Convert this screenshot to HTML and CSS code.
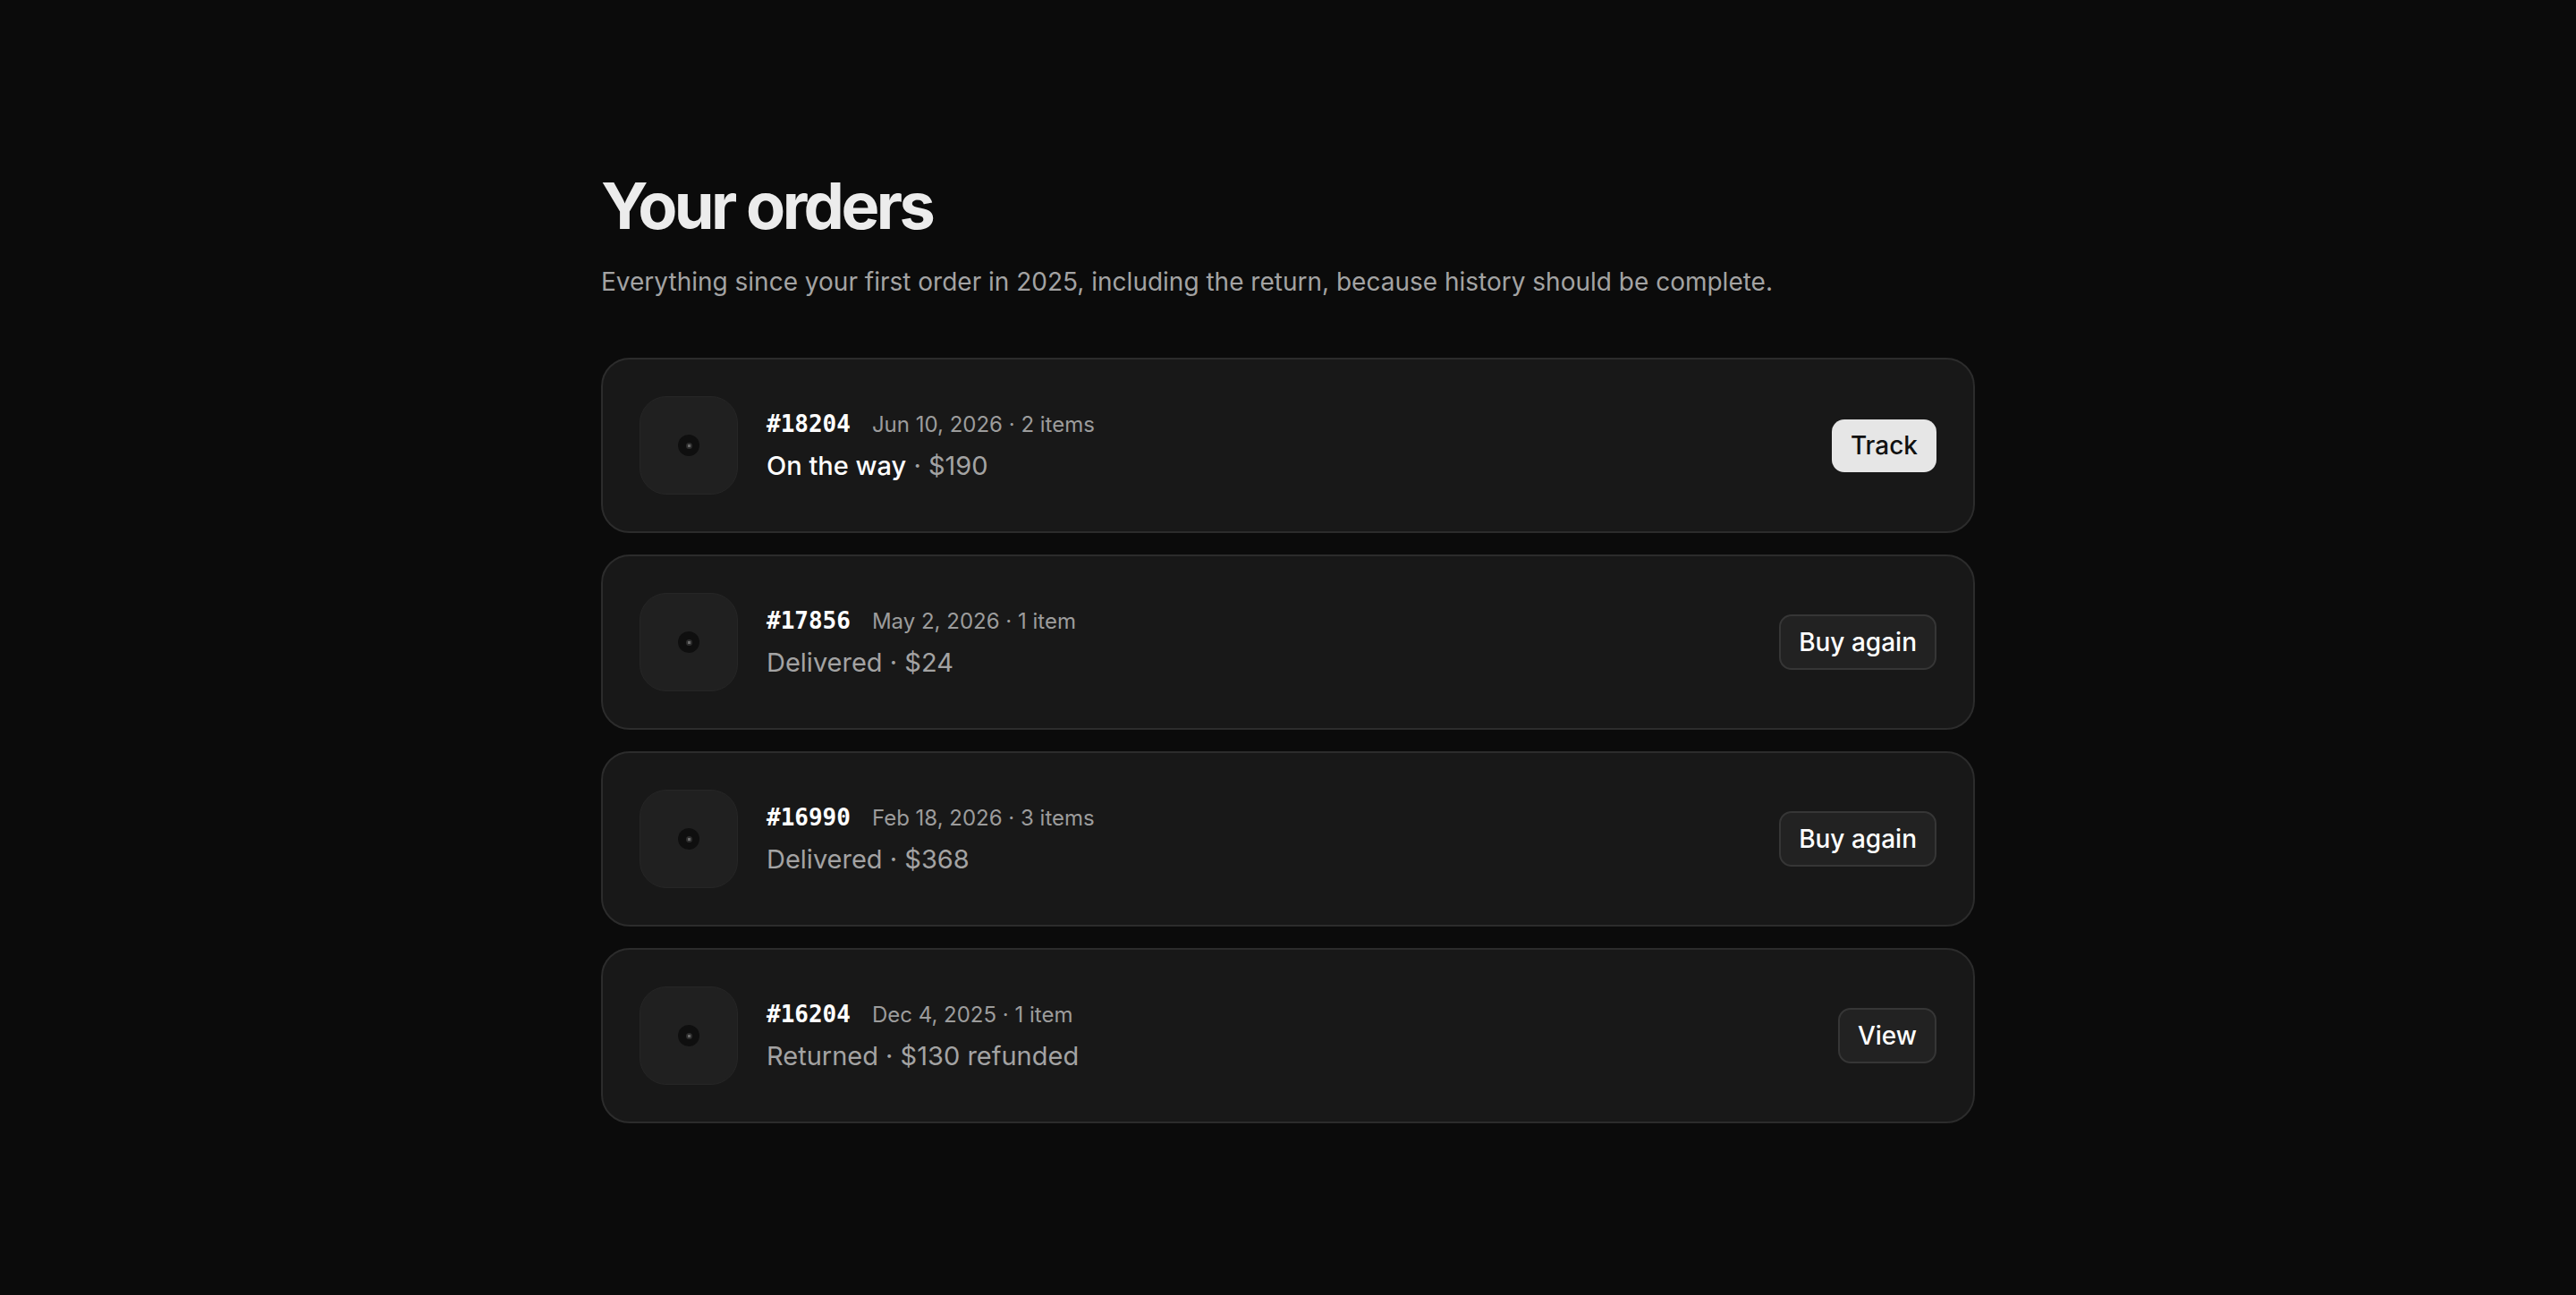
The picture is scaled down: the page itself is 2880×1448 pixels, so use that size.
FILE: index.html
```html
<!DOCTYPE html>
<html lang="en">
<head>
    <meta charset="UTF-8">
    <meta name="viewport" content="width=device-width, initial-scale=1.0">
    <title>Your orders</title>
    <link rel="stylesheet" href="styles.css">
</head>
<body>
    <main class="orders">
        <h1 class="orders-title">Your orders</h1>
        <p class="orders-lead">Everything since your first order in 2025, including the return, because history should be complete.</p>

        <ul class="order-list">
            <li class="order-card">
                <div class="order-thumb"><span class="thumb-dot"></span></div>
                <div class="order-info">
                    <div class="order-meta">
                        <span class="order-id">#18204</span>
                        <span class="order-date">Jun 10, 2026 · 2 items</span>
                    </div>
                    <div class="order-status"><strong>On the way</strong> · $190</div>
                </div>
                <button class="btn btn-primary">Track</button>
            </li>
            <li class="order-card">
                <div class="order-thumb"><span class="thumb-dot"></span></div>
                <div class="order-info">
                    <div class="order-meta">
                        <span class="order-id">#17856</span>
                        <span class="order-date">May 2, 2026 · 1 item</span>
                    </div>
                    <div class="order-status">Delivered · $24</div>
                </div>
                <button class="btn">Buy again</button>
            </li>
            <li class="order-card">
                <div class="order-thumb"><span class="thumb-dot"></span></div>
                <div class="order-info">
                    <div class="order-meta">
                        <span class="order-id">#16990</span>
                        <span class="order-date">Feb 18, 2026 · 3 items</span>
                    </div>
                    <div class="order-status">Delivered · $368</div>
                </div>
                <button class="btn">Buy again</button>
            </li>
            <li class="order-card">
                <div class="order-thumb"><span class="thumb-dot"></span></div>
                <div class="order-info">
                    <div class="order-meta">
                        <span class="order-id">#16204</span>
                        <span class="order-date">Dec 4, 2025 · 1 item</span>
                    </div>
                    <div class="order-status">Returned · $130 refunded</div>
                </div>
                <button class="btn">View</button>
            </li>
        </ul>
    </main>
</body>
</html>
```

FILE: styles.css
```css
* {
    margin: 0;
    padding: 0;
    box-sizing: border-box;
}
body {
    background: #0b0b0b;
    color: #ededed;
    font-family: Inter, "Noto Sans", sans-serif;
}
.orders {
    width: 1536px;
    margin: 0 auto;
    padding: 190px 0 120px;
}
.orders-title {
    font-size: 72px;
    line-height: 1.1;
    font-weight: 700;
    letter-spacing: -0.05em;
    color: #ececec;
    margin-bottom: 27px;
}
.orders-lead {
    font-size: 28px;
    line-height: 39px;
    color: #a3a3a3;
    margin-bottom: 65px;
}
.order-list {
    list-style: none;
    display: flex;
    flex-direction: column;
    gap: 24px;
}
.order-card {
    display: flex;
    align-items: center;
    gap: 32px;
    padding: 41px;
    background: #181818;
    border: 2px solid #2c2c2c;
    border-radius: 32px;
}
/* placeholder picture of the order */
.order-thumb {
    width: 110px;
    height: 110px;
    flex-shrink: 0;
    display: flex;
    align-items: center;
    justify-content: center;
    background: #202020;
    border: 1px solid #262626;
    border-radius: 30px;
}
.thumb-dot {
    width: 24px;
    height: 24px;
    border-radius: 50%;
    background: #0f0f0f;
    display: flex;
    align-items: center;
    justify-content: center;
}
.thumb-dot::after {
    content: "";
    width: 7px;
    height: 7px;
    border-radius: 50%;
    background: radial-gradient(circle, #6a6a6a 0 1.5px, #2e2e2e 2px);
}
.order-info {
    flex: 1;
    display: flex;
    flex-direction: column;
    gap: 12px;
}
.order-meta {
    display: flex;
    align-items: baseline;
    gap: 24px;
}
.order-id {
    font-family: "DejaVu Sans Mono", "Liberation Mono", monospace;
    font-size: 26px;
    font-weight: 700;
    color: #fff;
    line-height: 32px;
}
.order-date {
    font-size: 24px;
    line-height: 32px;
    color: #9c9c9c;
}
.order-status {
    font-size: 29px;
    line-height: 36px;
    color: #a3a3a3;
}
.order-status strong {
    font-weight: 500;
    color: #fff;
}
.btn {
    font-family: Inter, "Noto Sans", sans-serif;
    font-size: 28px;
    line-height: 34px;
    font-weight: 500;
    padding: 12px 20px;
    border: 2px solid #363636;
    border-radius: 14px;
    background: #222;
    color: #fff;
    cursor: pointer;
}
.btn-primary {
    padding: 12px 21px 13px;
    border: none;
    background: #e6e6e6;
    color: #111;
}
```
